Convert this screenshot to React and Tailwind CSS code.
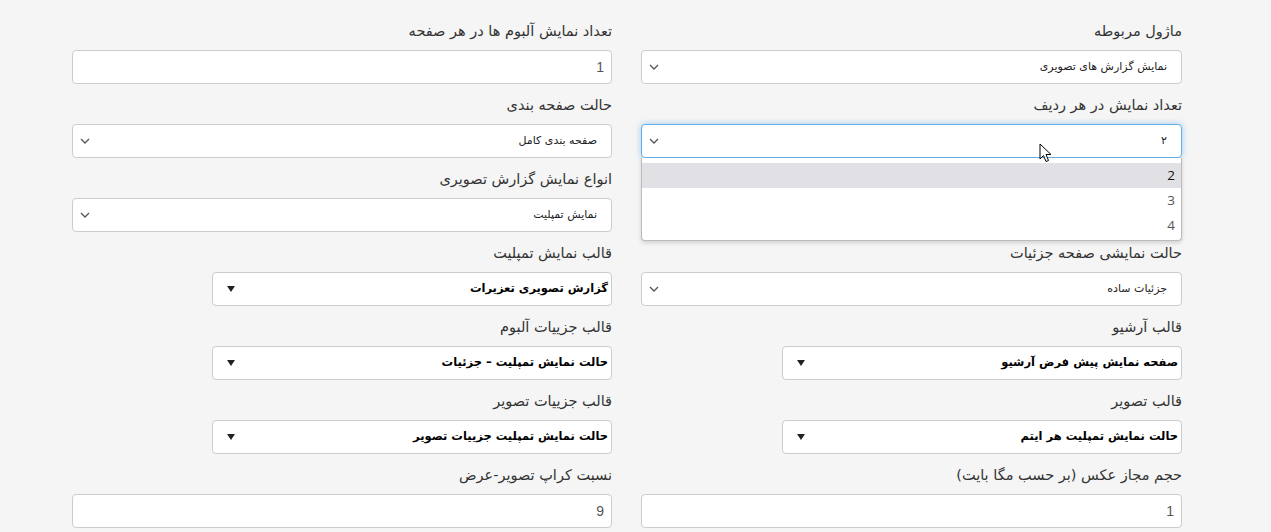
import React from 'react';

const fa = { fontFamily: '"DejaVu Sans", "Noto Sans", sans-serif' };

const Chevron = () => (
  <svg width="10" height="6" viewBox="0 0 10 6" className="shrink-0">
    <polyline points="1,1 5,5 9,1" fill="none" stroke="#555" strokeWidth="1.3" />
  </svg>
);

const Triangle = () => (
  <svg width="8" height="6" viewBox="0 0 8 6" className="shrink-0">
    <polygon points="0,0 8,0 4,6" fill="#222" />
  </svg>
);

const Label = ({ children }) => (
  <div className="h-[20px] leading-[20px] mb-[9px] text-[14.5px] text-[#333] text-right whitespace-nowrap">
    {children}
  </div>
);

const TextInput = ({ value }) => (
  <div className="h-[34px] bg-white border border-[#ccc] rounded-[4px] flex items-center px-[7px] text-[14px] text-[#555]" style={{ fontFamily: '"Liberation Sans", Arial, sans-serif' }}>
    {value}
  </div>
);

const SoftSelect = ({ value, focused }) => (
  <div
    className={
      'h-[34px] bg-white border rounded-[4px] flex items-center justify-between pr-[14px] pl-[7px] ' +
      (focused ? 'border-[#66afe9] shadow-[0_0_6px_rgba(102,175,233,0.6)]' : 'border-[#ccc]')
    }
  >
    <span className="text-[11px] text-[#222] font-medium whitespace-nowrap">{value}</span>
    <Chevron />
  </div>
);

const NativeSelect = ({ value }) => (
  <div className="flex justify-start">
    <div className="w-[400px] h-[34px] bg-white border border-[#ccc] rounded-[4px] flex items-center justify-between pr-[3px] pl-[14px]">
      <span className="text-[11.5px] text-black font-bold whitespace-nowrap">{value}</span>
      <Triangle />
    </div>
  </div>
);

const Field = ({ label, children }) => (
  <div>
    <Label>{label}</Label>
    {children}
  </div>
);

export default function App() {
  return (
    <div className="min-h-screen bg-[#f5f5f5] overflow-hidden" style={fa}>
      <div dir="rtl" className="w-[1110px] ml-[72px] pt-[21px] relative">
        <div className="grid grid-cols-[541px_540px] gap-x-[29px] gap-y-[11px]">
          <Field label="ماژول مربوطه">
            <SoftSelect value="نمایش گزارش های تصویری" />
          </Field>
          <Field label="تعداد نمایش آلبوم ها در هر صفحه">
            <TextInput value="1" />
          </Field>

          <Field label="تعداد نمایش در هر ردیف">
            <div className="relative">
              <SoftSelect value="۲" focused />
              <div className="absolute z-10 top-[34px] left-0 right-0 h-[83px] bg-white border border-[#bbb] border-t-0 rounded-b-[4px] shadow-[0_2px_4px_rgba(0,0,0,0.15)] pt-[5px]" style={{ fontFamily: '"Open Sans", "Liberation Sans", sans-serif' }}>
                <div className="h-[25px] leading-[25px] bg-[#e1e0e5] pr-[6px] text-[13.5px] text-[#111]">2</div>
                <div className="h-[25px] leading-[25px] pr-[6px] text-[13.5px] text-[#555]">3</div>
                <div className="h-[25px] leading-[25px] pr-[6px] text-[13.5px] text-[#555]">4</div>
              </div>
              <svg width="14" height="21" viewBox="0 0 14 21" className="absolute z-20 top-[19px] left-[398px]">
                <path d="M1 1 L1 16 L4.5 12.5 L7 18.5 L9.5 17.5 L7 11.5 L12 11.5 Z" fill="#fff" stroke="#000" strokeWidth="1" strokeLinejoin="round" />
              </svg>
            </div>
          </Field>
          <Field label="حالت صفحه بندی">
            <SoftSelect value="صفحه بندی کامل" />
          </Field>

          <div />
          <Field label="انواع نمایش گزارش تصویری">
            <SoftSelect value="نمایش تمپلیت" />
          </Field>

          <Field label="حالت نمایشی صفحه جزئیات">
            <SoftSelect value="جزئیات ساده" />
          </Field>
          <Field label="قالب نمایش تمپلیت">
            <NativeSelect value="گزارش تصویری تعزیرات" />
          </Field>

          <Field label="قالب آرشیو">
            <NativeSelect value="صفحه نمایش پیش فرض  آرشیو" />
          </Field>
          <Field label="قالب جزییات آلبوم">
            <NativeSelect value="حالت نمایش تمپلیت – جزئیات" />
          </Field>

          <Field label="قالب تصویر">
            <NativeSelect value="حالت نمایش تمپلیت هر ایتم" />
          </Field>
          <Field label="قالب جزییات تصویر">
            <NativeSelect value="حالت نمایش تمپلیت جزییات تصویر" />
          </Field>

          <Field label="حجم مجاز عکس (بر حسب مگا بایت)">
            <TextInput value="1" />
          </Field>
          <Field label="نسبت کراپ تصویر-عرض">
            <TextInput value="9" />
          </Field>
        </div>
      </div>
    </div>
  );
}
